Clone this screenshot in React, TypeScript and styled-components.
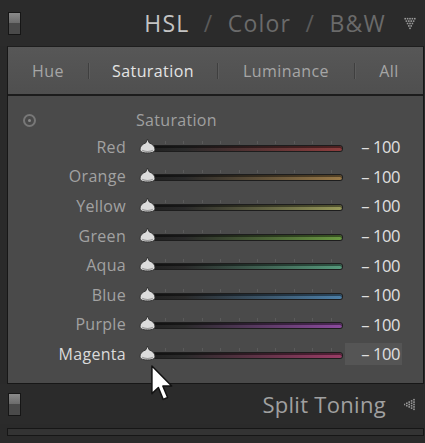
import React from "react";
import styled, { createGlobalStyle } from "styled-components";

const Global = createGlobalStyle`
  html, body { margin: 0; padding: 0; background: #2a2a2a; }
  body { font-family: "Open Sans", "Liberation Sans", sans-serif; width: 425px; height: 443px; overflow: hidden; }
`;

const Root = styled.div`
  position: relative;
  width: 425px;
  height: 443px;
  background: #2a2a2a;
  display: flex;
  flex-direction: column;
`;

const Header = styled.div<{ $h: number }>`
  height: ${(p) => p.$h}px;
  display: flex;
  align-items: center;
  padding: 0 9px 0 8px;
  box-sizing: border-box;
  background: #2b2b2b;
`;

const Switch = styled.div`
  width: 11px;
  height: 21px;
  border: 1px solid #161616;
  display: flex;
  flex-direction: column;
  &::before { content: ""; flex: 1; background: linear-gradient(#8a8a8a, #6c6c6c); }
  &::after { content: ""; flex: 1; background: #4a4a4a; }
`;

const Title = styled.div<{ $size: number; $ls: number }>`
  margin-left: auto;
  font-size: ${(p) => p.$size}px;
  letter-spacing: ${(p) => p.$ls}px;
  color: #6a6a6a;
  white-space: pre;
`;

const Active = styled.span`
  color: #c4c4c4;
`;

const Dim = styled.span`
  color: #5a5a5a;
`;

const IconBox = styled.div`
  width: 12px;
  margin-left: 18px;
  display: flex;
  align-items: center;
  justify-content: center;
`;

const Panel = styled.div`
  margin-left: 7px;
  margin-right: 1px;
  border: 1px solid #171717;
  border-top-color: #1e1e1e;
  display: flex;
  flex-direction: column;
`;

const Tabs = styled.div`
  height: 47px;
  display: flex;
  align-items: center;
  background: linear-gradient(#575757, #4f4f4f);
  border-bottom: 2px solid #1c1c1c;
  font-size: 16px;
  letter-spacing: 0.4px;
`;

const Tab = styled.div<{ $active?: boolean; $w: number }>`
  width: ${(p) => p.$w}px;
  text-align: center;
  color: ${(p) => (p.$active ? "#e4e4e4" : "#a6a6a6")};
`;

const Sep = styled.div`
  width: 1px;
  height: 16px;
  background: #3f3f3f;
  box-shadow: 1px 0 0 #5c5c5c;
`;

const Content = styled.div`
  background: #4a4a4a;
  height: 287px;
  padding-top: 12px;
  box-sizing: border-box;
  display: flex;
  flex-direction: column;
`;

const SubHead = styled.div`
  display: flex;
  align-items: center;
  height: 24px;
`;

const Target = styled.div`
  width: 13px;
  height: 13px;
  margin-left: 15px;
  border-radius: 50%;
  border: 2px solid #787878;
  box-sizing: border-box;
  display: flex;
  align-items: center;
  justify-content: center;
  &::after { content: ""; width: 3px; height: 3px; border-radius: 50%; background: #8a8a8a; }
`;

const SubTitle = styled.div`
  margin-left: 100px;
  font-size: 16px;
  letter-spacing: 0.3px;
  color: #a0a0a0;
`;

const Row = styled.div`
  display: flex;
  align-items: center;
  height: 29.6px;
`;

const Label = styled.div<{ $active?: boolean }>`
  width: 118px;
  text-align: right;
  font-size: 16px;
  letter-spacing: 0.3px;
  color: ${(p) => (p.$active ? "#dadada" : "#a2a2a2")};
`;

const Slider = styled.div`
  position: relative;
  width: 203px;
  height: 16px;
  margin-left: 13px;
`;

const Track = styled.div<{ $c: string }>`
  position: absolute;
  left: 6px;
  right: 0;
  top: 7px;
  height: 5px;
  border-radius: 3px;
  background: linear-gradient(90deg, #202020 0%, #2a2a2a 20%, ${(p) => p.$c} 100%);
  box-shadow: 0 0 0 1px #1d1d1d, inset 0 2px 0 rgba(0,0,0,0.45);
`;

const Ticks = styled.div`
  position: absolute;
  left: 26px;
  right: 10px;
  top: 2px;
  height: 3px;
  background: repeating-linear-gradient(90deg, #5a5a5a 0 1px, transparent 1px 18.4px);
`;

const Thumb = styled.svg`
  position: absolute;
  left: 0;
  top: 0;
`;

const Value = styled.div<{ $active?: boolean }>`
  margin-left: 3px;
  width: 57px;
  height: 22px;
  display: flex;
  align-items: center;
  justify-content: flex-end;
  padding-right: 2px;
  box-sizing: border-box;
  font-size: 16.5px;
  color: #e0e0e0;
  letter-spacing: -0.4px;
  background: ${(p) => (p.$active ? "#555555" : "transparent")};
`;

const Bottom = styled.div`
  margin: 4px 1px 0 7px;
  height: 6px;
  border: 1px solid #161616;
  background: #333;
`;

const Cursor = styled.svg`
  position: absolute;
  left: 151px;
  top: 365px;
`;

const rows = [
  { name: "Red", c: "#8e3d3d" },
  { name: "Orange", c: "#9a7a48" },
  { name: "Yellow", c: "#989a5a" },
  { name: "Green", c: "#6a9a42" },
  { name: "Aqua", c: "#569a7c" },
  { name: "Blue", c: "#4c7fa8" },
  { name: "Purple", c: "#8c4a9e" },
  { name: "Magenta", c: "#9a3c66" },
];

const DotTriangle = ({ dir }: { dir: "down" | "left" }) => {
  const dots: React.ReactElement[] = [];
  for (let i = 0; i < 5; i++) {
    const n = 5 - i;
    for (let j = 0; j < n; j++) {
      const a = i * 3 + 1.5;
      const b = i * 1.5 + j * 3 + 1.5;
      const [x, y] = dir === "down" ? [b, a] : [14 - a, b];
      dots.push(<rect key={`${i}-${j}`} x={x - 1} y={y - 1} width={2} height={2} fill="#9a9a9a" />);
    }
  }
  return (
    <svg width={15} height={15} viewBox="0 0 15 15">
      {dots}
    </svg>
  );
};

export default function App() {
  return (
    <Root>
      <Global />
      <Header $h={46}>
        <Switch />
        <Title $size={23} $ls={1.2}>
          <Active>HSL</Active>
          <Dim>{"  /  "}</Dim>Color<Dim>{"  /  "}</Dim>B&amp;W
        </Title>
        <IconBox>
          <DotTriangle dir="down" />
        </IconBox>
      </Header>
      <Panel>
        <Tabs>
          <Tab $w={80}>Hue</Tab>
          <Sep />
          <Tab $w={128} $active>Saturation</Tab>
          <Sep />
          <Tab $w={136}>Luminance</Tab>
          <Sep />
          <Tab $w={68}>All</Tab>
        </Tabs>
        <Content>
          <SubHead>
            <Target />
            <SubTitle>Saturation</SubTitle>
          </SubHead>
          {rows.map((r) => (
            <Row key={r.name}>
              <Label $active={r.name === "Magenta"}>{r.name}</Label>
              <Slider>
                <Ticks />
                <Track $c={r.c} />
                <Thumb width={17} height={15} viewBox="0 0 16 14">
                  <path d="M8 0 L9.5 3.5 C13 5 15 7 15 9.5 C15 12 13 13 8 13 C3 13 1 12 1 9.5 C1 7 3 5 6.5 3.5 Z" fill="#dcdcdc" stroke="#2a2a2a" strokeWidth="0.8" />
                  <path d="M3 10.5 C5 12 11 12 13 10.5" stroke="#9a9a9a" strokeWidth="1" fill="none" />
                </Thumb>
              </Slider>
              <Value $active={r.name === "Magenta"}>–&nbsp;100</Value>
            </Row>
          ))}
        </Content>
      </Panel>
      <Header $h={40}>
        <Switch />
        <Title $size={22} $ls={0.3}>
          <span style={{ color: "#a0a0a0" }}>Split Toning</span>
        </Title>
        <IconBox>
          <DotTriangle dir="left" />
        </IconBox>
      </Header>
      <Bottom />
      <Cursor width={24} height={37} viewBox="0 0 13 20">
        <path d="M0.5 0.5 L0.5 15.5 L4 12.2 L6.6 18.6 L9 17.6 L6.4 11.4 L11.2 11.4 Z" fill="#ffffff" stroke="#111" strokeWidth="0.8" strokeLinejoin="round" />
      </Cursor>
    </Root>
  );
}
